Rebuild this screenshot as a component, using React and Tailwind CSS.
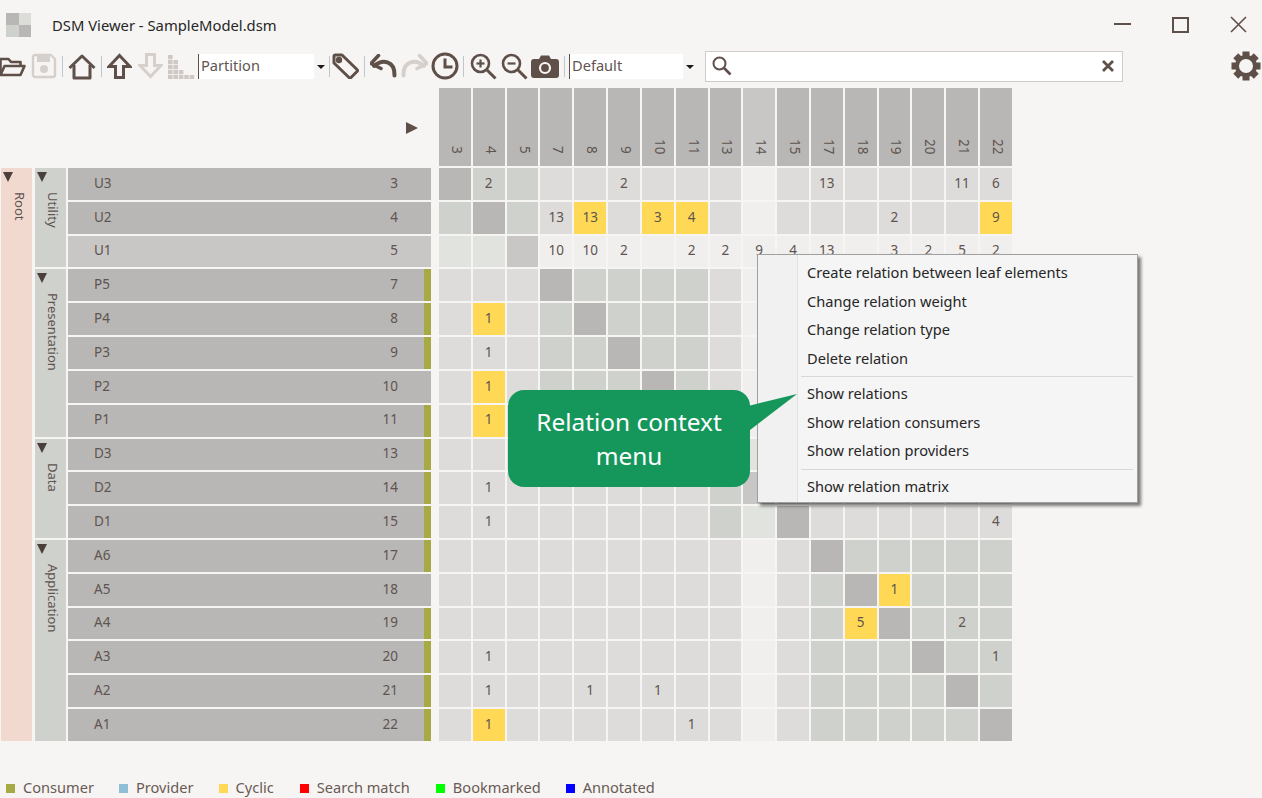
import React from "react";

const C = "#5f4f49";
const D = "#d6d0cc";
const FONT = "font-['Noto_Sans','Open_Sans',sans-serif]";

const ids = [3, 4, 5, 7, 8, 9, 10, 11, 13, 14, 15, 17, 18, 19, 20, 21, 22];
const groups = [
  { name: "Utility", rows: [["U3", 3], ["U2", 4], ["U1", 5]] },
  { name: "Presentation", rows: [["P5", 7], ["P4", 8], ["P3", 9], ["P2", 10], ["P1", 11]] },
  { name: "Data", rows: [["D3", 13], ["D2", 14], ["D1", 15]] },
  { name: "Application", rows: [["A6", 17], ["A5", 18], ["A4", 19], ["A3", 20], ["A2", 21], ["A1", 22]] },
];
const consumerRows = [7, 8, 9, 11, 13, 14, 15, 17, 19, 20, 21, 22];
const groupOf = (id) => (id <= 5 ? 0 : id <= 11 ? 1 : id <= 15 ? 2 : 3);

const values = {
  3: { 4: 2, 9: 2, 17: 13, 21: 11, 22: 6 },
  4: { 7: 13, 8: "13y", 10: "3y", 11: "4y", 19: 2, 22: "9y" },
  5: { 7: 10, 8: 10, 9: 2, 11: 2, 13: 2, 14: 9, 15: 4, 17: 13, 19: 3, 20: 2, 21: 5, 22: 2 },
  8: { 4: "1y" },
  9: { 4: 1 },
  10: { 4: "1y" },
  11: { 4: "1y" },
  14: { 4: 1 },
  15: { 4: 1, 22: 4 },
  18: { 19: "1y" },
  19: { 18: "5y", 21: 2 },
  20: { 4: 1, 22: 1 },
  21: { 4: 1, 8: 1, 10: 1 },
  22: { 4: "1y", 11: 1 },
};

function cellClass(r, c, yellow) {
  if (yellow) return "bg-[#ffd955]";
  const hi = r === 5 || c === 14;
  if (r === c) return hi ? "bg-[#c8c7c5]" : "bg-[#b8b7b5]";
  if (groupOf(r) === groupOf(c)) return hi ? "bg-[#e1e3df]" : "bg-[#cfd1cd]";
  return hi ? "bg-[#f0efed]" : "bg-[#dddcda]";
}

const Sep = ({ ml }) => <div className={`w-px h-[21px] bg-[#bcc8d0] shrink-0 ${ml}`} />;

const Open = () => (
  <svg width="27" height="24" viewBox="0 0 27 24" fill="none" stroke={C} strokeWidth="2.6" strokeLinejoin="round">
    <path d="M1.5 21V5h8l2.5 3h9.5v4" />
    <path d="M1.5 21l4-9h20l-4 9z" />
  </svg>
);
const Save = () => (
  <svg width="26" height="26" viewBox="0 0 26 26" fill="none" stroke={D} strokeWidth="2.4" strokeLinejoin="round">
    <path d="M2 4a2 2 0 0 1 2-2h16l4 4v16a2 2 0 0 1-2 2H4a2 2 0 0 1-2-2z" />
    <rect x="6" y="3" width="13" height="6" fill={D} stroke="none" />
    <circle cx="13" cy="16" r="4" fill={D} stroke="none" />
  </svg>
);
const Home = () => (
  <svg width="28" height="27" viewBox="0 0 28 27" fill="none" stroke={C} strokeWidth="3" strokeLinejoin="round">
    <path d="M1.5 15L14 3l12.5 12" />
    <path d="M6 12v13h16V12" />
  </svg>
);
const UpArrow = ({ color, flip }) => (
  <svg width="25" height="26" viewBox="0 0 25 26" fill="none" stroke={color} strokeWidth="3" strokeLinejoin="miter" className={flip ? "rotate-180" : ""}>
    <path d="M12.5 2.5L23 13.5h-6.5v11h-8v-11H2z" />
  </svg>
);
const Staircase = () => {
  const heights = [5, 4, 2, 1, 1];
  const rects = [];
  heights.forEach((h, x) => {
    for (let y = 0; y < h; y++) {
      rects.push(<rect key={`${x}-${y}`} x={x * 5.4} y={21 - y * 5} width="4.6" height="4.2" fill="#cfc8c4" />);
    }
  });
  return <svg width="27" height="25" viewBox="0 0 27 25">{rects}</svg>;
};
const Tag = () => (
  <svg width="27" height="26" viewBox="0 0 27 26" fill="none" stroke={C} strokeLinejoin="round">
    <path d="M2 3.5a1.5 1.5 0 0 1 1.5-1.5h6.5l15 14.5a1.5 1.5 0 0 1 0 2L19 24.5a1.5 1.5 0 0 1-2 0L2 10z" strokeWidth="3" />
    <circle cx="7" cy="7" r="3.2" fill={C} stroke="none" />
  </svg>
);
const Undo = ({ color, flip }) => (
  <svg width="27" height="24" viewBox="0 0 27 24" fill="none" stroke={color} className={flip ? "-scale-x-100" : ""}>
    <path d="M4 12C12 5 25 6 24.5 21.5" strokeWidth="4" strokeLinecap="round" />
    <path d="M8.5 1.5L1 9.5l10 5" strokeWidth="3.6" strokeLinejoin="round" strokeLinecap="round" />
  </svg>
);
const Clock = () => (
  <svg width="28" height="28" viewBox="0 0 28 28" fill="none" stroke={C} strokeWidth="3">
    <circle cx="14" cy="14" r="12" />
    <path d="M14 6.5V15h7.5" />
  </svg>
);
const Zoom = ({ plus }) => (
  <svg width="27" height="27" viewBox="0 0 27 27" fill="none" stroke={C}>
    <circle cx="10.5" cy="10.5" r="8.5" strokeWidth="2.6" />
    <path d="M17 17l8.5 8.5" strokeWidth="3" />
    <path d="M6.5 10.5h8" strokeWidth="2.2" />
    {plus && <path d="M10.5 6.5v8" strokeWidth="2.2" />}
  </svg>
);
const Camera = () => (
  <svg width="28" height="23" viewBox="0 0 28 23">
    <path d="M3 4h5l2-3.5h8L20 4h5a3 3 0 0 1 3 3v13a3 3 0 0 1-3 3H3a3 3 0 0 1-3-3V7a3 3 0 0 1 3-3z" fill={C} />
    <circle cx="14" cy="13" r="5" fill="none" stroke="#f6f5f3" strokeWidth="2.2" />
    <circle cx="14" cy="13" r="2" fill={C} />
  </svg>
);
const Caret = () => (
  <svg width="8" height="4" viewBox="0 0 8 4"><path d="M0 0h8L4 4z" fill="#1a1a1a" /></svg>
);
const Gear = () => (
  <svg width="30" height="30" viewBox="0 0 30 30">
    {[0, 45, 90, 135, 180, 225, 270, 315].map((a) => (
      <rect key={a} x="11.5" y="0.5" width="7" height="7" fill={C} transform={`rotate(${a} 15 15)`} />
    ))}
    <circle cx="15" cy="15" r="9" fill="none" stroke={C} strokeWidth="4" />
  </svg>
);
const Tri = ({ className = "" }) => (
  <svg width="10" height="10" viewBox="0 0 10 10" className={className}><path d="M0 0h10L5 10z" fill="#4a3f3a" /></svg>
);

const Combo = ({ label, w, ml }) => (
  <div className={`flex items-center shrink-0 ${ml}`}>
    <div className={`h-[25px] ${w} bg-white border-l-[1.5px] border-[#5f4f49] pl-[2px] pb-[1px] flex items-center text-[14.6px] text-[#5f5450]`}>{label}</div>
    <div className="ml-[1px] mt-[1px] flex w-[12px] justify-center"><Caret /></div>
  </div>
);

const Legend = ({ color, label, ml }) => (
  <div className={`flex items-center ${ml}`}>
    <div className={`w-[9px] h-[9px] ${color}`} />
    <span className="ml-[8px] text-[14.6px] text-[#6a5a54] whitespace-nowrap">{label}</span>
  </div>
);

const menuItems = [
  "Create relation between leaf elements",
  "Change relation weight",
  "Change relation type",
  "Delete relation",
  null,
  "Show relations",
  "Show relation consumers",
  "Show relation providers",
  null,
  "Show relation matrix",
];

export default function App() {
  return (
    <div className={`relative w-[1262px] h-[798px] overflow-hidden bg-[#f6f5f3] ${FONT}`}>
      {/* Title bar */}
      <div className="h-[50px] flex items-start">
        <div className="ml-[6px] mt-[13px] grid grid-cols-2 w-[25px] h-[24px] shrink-0">
          <div className="bg-[#b8b7b5]" />
          <div className="bg-[#dcdcd9]" />
          <div className="bg-[#cfd1cd]" />
          <div className="bg-[#b8b7b5]" />
        </div>
        <div className="ml-[21px] mt-[15px] text-[14.8px] leading-[20px] text-[#262626] whitespace-nowrap">DSM Viewer - SampleModel.dsm</div>
        <div className="ml-auto flex items-start">
          <div className="mt-[23px] w-[17px] h-[2px] bg-[#5f4f49]" />
          <div className="ml-[41px] mt-[17px] w-[17px] h-[16px] border-2 border-[#5f4f49]" />
          <svg width="17" height="17" viewBox="0 0 17 17" className="ml-[41px] mr-[15px] mt-[16px]" fill="none" stroke={C} strokeWidth="1.6">
            <path d="M1 1l15 15M16 1L1 16" />
          </svg>
        </div>
      </div>

      {/* Toolbar */}
      <div className="h-[32px] flex items-center">
        <div className="shrink-0 ml-[-1px]"><Open /></div>
        <div className="shrink-0 ml-[5px]"><Save /></div>
        <Sep ml="ml-[5px]" />
        <div className="shrink-0 ml-[5px]"><Home /></div>
        <Sep ml="ml-[5px]" />
        <div className="shrink-0 ml-[5px]"><UpArrow color={C} /></div>
        <div className="shrink-0 ml-[6px]"><UpArrow color={D} flip /></div>
        <div className="shrink-0 ml-[5px]"><Staircase /></div>
        <Combo label="Partition" w="w-[116px]" ml="ml-[3px]" />
        <Sep ml="ml-[2px]" />
        <div className="shrink-0 ml-[2px]"><Tag /></div>
        <Sep ml="ml-[5px]" />
        <div className="shrink-0 ml-[5px]"><Undo color={C} /></div>
        <div className="shrink-0 ml-[4px]"><Undo color={D} flip /></div>
        <div className="shrink-0 ml-[3px]"><Clock /></div>
        <Sep ml="ml-[4px]" />
        <div className="shrink-0 ml-[6px]"><Zoom plus /></div>
        <div className="shrink-0 ml-[4px]"><Zoom /></div>
        <div className="shrink-0 ml-[3px]"><Camera /></div>
        <Sep ml="ml-[5px]" />
        <Combo label="Default" w="w-[114px]" ml="ml-[4px]" />
        <div className="ml-[9px] w-[418px] h-[31px] bg-white border-[1.5px] border-[#d3cbc9] flex items-center px-[4px] justify-between shrink-0">
          <svg width="20" height="20" viewBox="0 0 20 20" fill="none" stroke={C} className="ml-[2px]">
            <circle cx="7.5" cy="7.5" r="6" strokeWidth="2" />
            <path d="M12 12l6.5 6.5" strokeWidth="2.6" />
          </svg>
          <svg width="12" height="12" viewBox="0 0 12 12" fill="none" stroke={C} strokeWidth="2.8" className="mr-[4px]">
            <path d="M1 1l10 10M11 1L1 11" />
          </svg>
        </div>
        <div className="ml-auto mr-[1px] shrink-0"><Gear /></div>
      </div>

      {/* Column headers */}
      <div className="mt-[6px] h-[78px] flex">
        <div className="w-[439px] shrink-0 flex justify-end items-start pt-[34px] pr-[21px]">
          <svg width="12" height="12" viewBox="0 0 12 12"><path d="M0 0l12 6-12 6z" fill={C} /></svg>
        </div>
        <div className="grid grid-cols-[repeat(17,31.82px)] gap-x-[2px]">
          {ids.map((id) => (
            <div key={id} className={`flex flex-col items-center justify-end pb-[12px] ${id === 14 ? "bg-[#c8c7c5]" : "bg-[#b8b7b5]"}`}>
              <span className="[writing-mode:vertical-rl] text-[13.5px] leading-[16px] text-[#5f5450] translate-x-[2px]">{id}</span>
            </div>
          ))}
        </div>
      </div>

      {/* Body */}
      <div className="mt-[2px] flex">
        {/* Row headers */}
        <div className="ml-[1px] w-[31px] h-[573px] bg-[#f2d9cf] shrink-0 flex flex-col items-start">
          <Tri className="ml-[2px] mt-[4px]" />
          <span className="ml-[11px] mt-[10px] [writing-mode:vertical-rl] text-[13px] leading-[16px] text-[#5f5450]">Root</span>
        </div>
        <div className="ml-[3px] flex flex-col gap-y-[2px] shrink-0">
          {groups.map((g) => (
            <div key={g.name} className="flex">
              <div className="w-[31px] bg-[#cfd1cd] shrink-0 flex flex-col items-start">
                <Tri className="ml-[2px] mt-[4px]" />
                <span className="ml-[10px] mt-[10px] [writing-mode:vertical-rl] text-[13px] leading-[16px] text-[#5f5450]">{g.name}</span>
              </div>
              <div className="ml-[2px] flex flex-col gap-y-[2px]">
                {g.rows.map(([name, id]) => (
                  <div key={id} className={`w-[363px] h-[31.82px] flex items-stretch ${id === 5 ? "bg-[#c8c7c5]" : "bg-[#b8b7b5]"}`}>
                    <div className="flex flex-1 items-center pb-[2px] pl-[26px] pr-[26px] text-[13.5px] text-[#5f5450]">
                      <span>{name}</span>
                      <span className="ml-auto">{id}</span>
                    </div>
                    <div className={`w-[7px] ${consumerRows.includes(id) ? "bg-[#a7a945]" : ""}`} />
                  </div>
                ))}
              </div>
            </div>
          ))}
        </div>

        {/* Matrix */}
        <div className="ml-[8px] grid grid-cols-[repeat(17,31.82px)] grid-rows-[repeat(17,31.82px)] gap-[2px]">
          {ids.map((r) =>
            ids.map((c) => {
              const raw = values[r]?.[c];
              const yellow = typeof raw === "string";
              const text = yellow ? raw.slice(0, -1) : raw;
              return (
                <div key={`${r}-${c}`} className={`flex items-center justify-center pb-[2px] text-[13.5px] text-[#5f5450] ${cellClass(r, c, yellow)}`}>
                  {text}
                </div>
              );
            })
          )}
        </div>
      </div>

      {/* Legend */}
      <div className="absolute left-[6px] top-[778px] h-[20px] flex items-center">
        <Legend color="bg-[#a7a945]" label="Consumer" />
        <Legend color="bg-[#8fbfd6]" label="Provider" ml="ml-[25px]" />
        <Legend color="bg-[#ffd955]" label="Cyclic" ml="ml-[25px]" />
        <Legend color="bg-[#ff0000]" label="Search match" ml="ml-[26px]" />
        <Legend color="bg-[#00ff00]" label="Bookmarked" ml="ml-[26px]" />
        <Legend color="bg-[#0000ff]" label="Annotated" ml="ml-[25px]" />
      </div>

      {/* Context menu */}
      <div className="absolute left-[757px] top-[254px] w-[381px] h-[249px] bg-[#f5f5f5] border border-[#a0a0a0] shadow-[3px_3px_3px_rgba(0,0,0,0.5)] flex flex-col pt-[4px]">
        <div className="absolute left-0 top-0 bottom-0 w-[40px] bg-[#f1f1f1] border-r border-[#e2e2e2]" />
        {menuItems.map((m, i) =>
          m ? (
            <div key={i} className="relative h-[28.5px] flex items-center pl-[49px] text-[14.6px] text-[#262626] whitespace-nowrap">{m}</div>
          ) : (
            <div key={i} className="relative ml-[43px] mr-[4px] my-[3px] h-px bg-[#d8d8d8]" />
          )
        )}
      </div>

      {/* Callout */}
      <svg width="50" height="40" viewBox="0 0 50 40" className="absolute left-[748px] top-[392px]">
        <path d="M0 14L49 2 2 38z" fill="#15975b" />
      </svg>
      <div className="absolute left-[508px] top-[390px] w-[242px] h-[97px] rounded-[16px] bg-[#15975b] flex flex-col items-center justify-center text-white text-[24.4px] leading-[34px]">
        <span>Relation context</span>
        <span>menu</span>
      </div>
    </div>
  );
}
